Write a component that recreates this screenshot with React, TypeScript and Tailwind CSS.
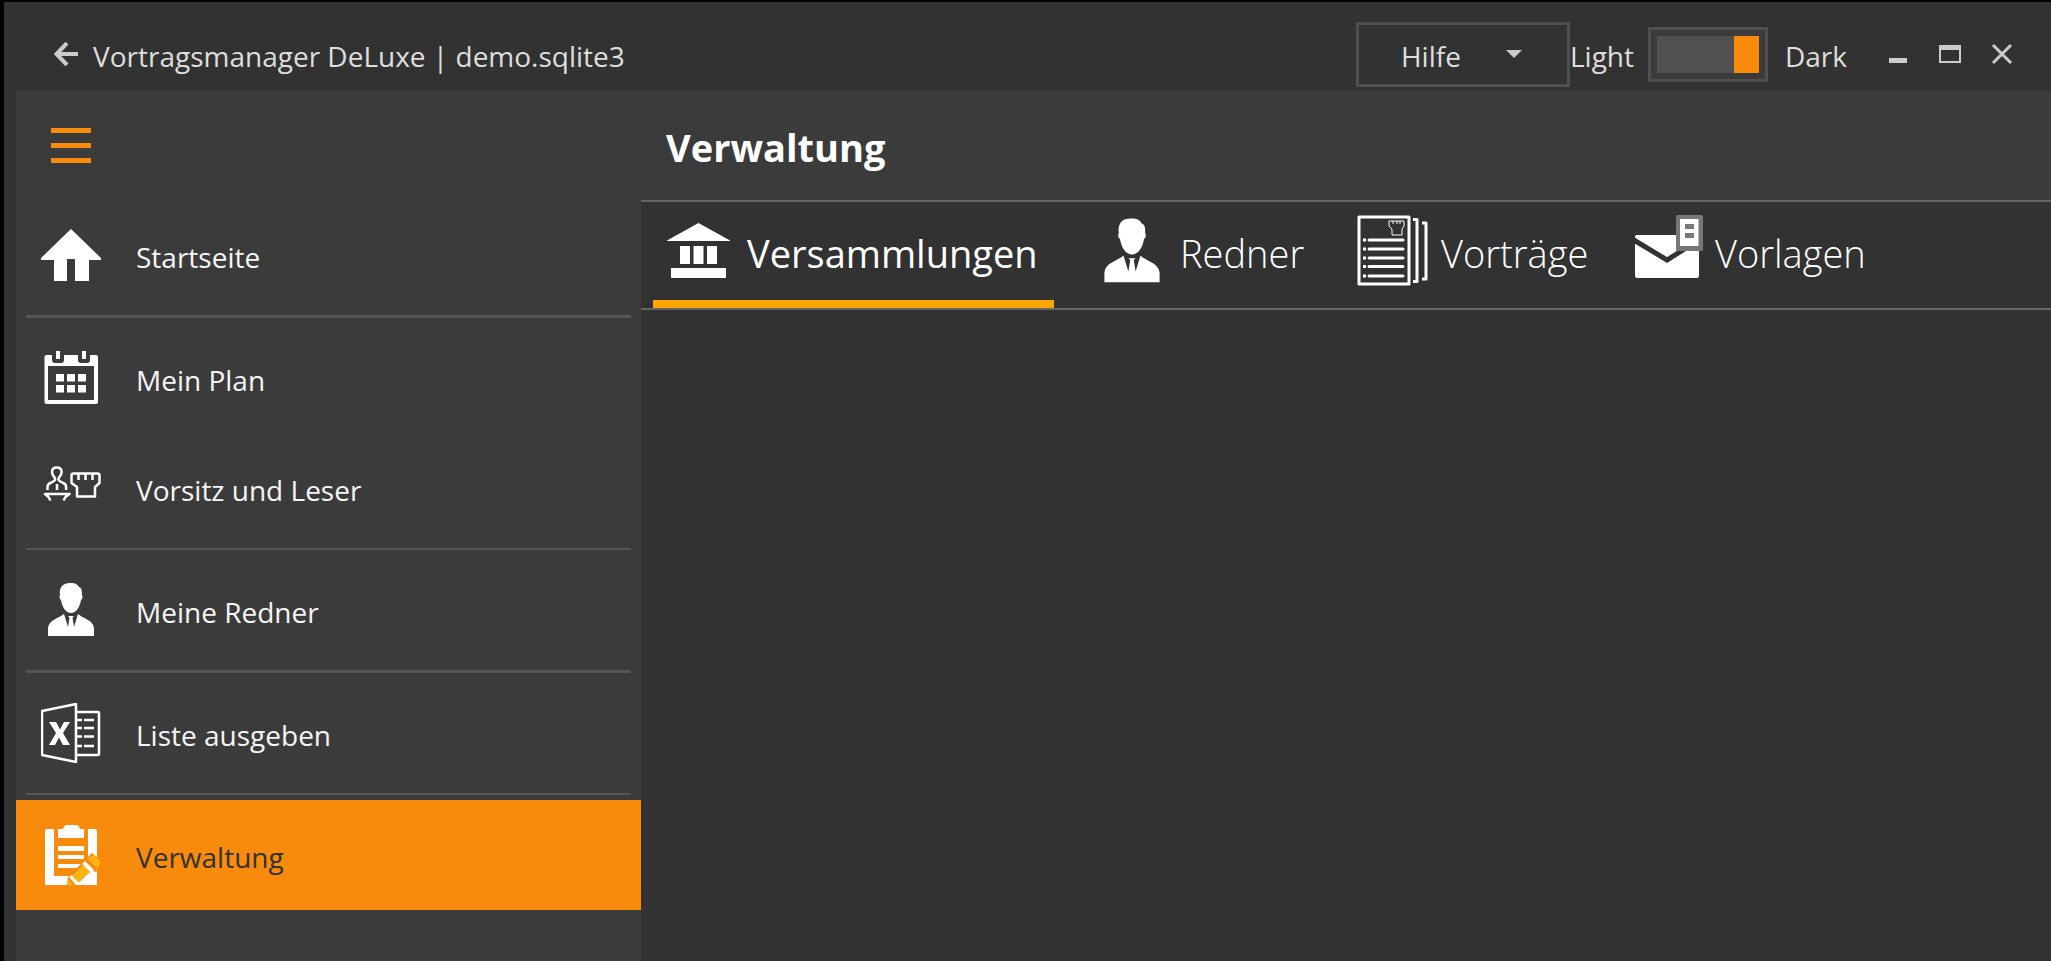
import React, { useState } from "react";

type IconProps = { className?: string };

const HomeIcon = ({ className }: IconProps) => (
  <svg viewBox="0 0 60 60" className={className} fill="currentColor" aria-hidden="true">
    <path d="M30 4 0 33v2h13v21h13V34h8v22h14V35h12v-2Z" />
  </svg>
);

const CalendarIcon = ({ className }: IconProps) => (
  <svg viewBox="0 0 60 60" className={className} fill="currentColor" aria-hidden="true">
    <path
      fillRule="evenodd"
      d="M5 7h6v5q0 3 3 3h6q3 0 3-3V7h14v5q0 3 3 3h6q3 0 3-3V7h6q2 0 2 2v45q0 2-2 2H5.500q-2 0-2-2V9q0-2 2-2ZM7 18v34h46V18Z"
    />
    <path d="M15 3h4v8h-4ZM41 3h4v8h-4ZM15 26h8v7.500h-8ZM26 26h8v7.500h-8ZM37 26h8v7.500h-8ZM15 37h8v7.500h-8ZM26 37h8v7.500h-8ZM37 37h8v7.500h-8Z" />
  </svg>
);

const ReaderIcon = ({ className }: IconProps) => (
  <svg
    viewBox="0 0 60 60"
    className={className}
    fill="none"
    stroke="currentColor"
    strokeWidth="2.500"
    strokeLinejoin="round"
    aria-hidden="true"
  >
    <path d="M6.500 32v-3q0-3 3-4l3.500-2q2-1 .5-3.500-2.500-2.500-2.500-5.500 0-4.500 4.800-4.500t4.800 4.500q0 3-2.500 5.500-1.500 2.500.5 3.500l3.500 2q3 1 3 4v3M16 26v6" />
    <path d="M9.500 42.500 7.500 39 4 36h24.500L24.500 39l-2 3.500" />
    <path d="M30.500 17.500q0-2 2-2h24q2 0 2 2V25l-4.500 4v9.500H36V29l-5.500-4ZM37.500 16v6M44.500 16v6M51.500 16v6" />
  </svg>
);

const PersonIcon = ({ className }: IconProps) => (
  <svg viewBox="0 0 60 60" className={className} fill="currentColor" aria-hidden="true">
    <path d="M29 3c5-.5 8 1.500 9 4 3 1 3 4 3 8 1 2 .5 4-1 5-1 7-5 13-10 13s-9-6-10-13c-1.500-1-2-3-1-5-1-7 2-12 10-12Z" />
    <path d="M7 56V48c1-8 9-9 16-14l4 13 1.500-9.500L27 36h6l-1.500 1.500L33 47l4-13c6 5 15 6 16 14v8Z" />
  </svg>
);

const ExcelIcon = ({ className }: IconProps) => (
  <svg
    viewBox="0 0 60 60"
    className={className}
    fill="none"
    stroke="currentColor"
    strokeWidth="2.500"
    strokeLinejoin="round"
    aria-hidden="true"
  >
    <path d="M1 8 35 1v58L1 52ZM35 9h22q1 0 1 1v41q0 1-1 1H35" />
    <path d="M36 17h5M43 17h10M36 25h5M43 25h10M36 33.500h5M43 33.500h10M36 43h5M43 43h10" />
    <path fill="currentColor" stroke="none" d="M8 19h7l4 7.500 4-7.500h6l-7 11 7 12h-7l-4-7.500-4 7.500H8l7-12Z" />
  </svg>
);

const ClipboardIcon = ({ className }: IconProps) => (
  <svg viewBox="0 0 60 60" className={className} aria-hidden="true">
    <path
      fill="#ffffff"
      d="M4 6q0-2 2-2h7v47h30l4-4V4h7q2 0 2 2v54H4ZM17 4h5q1-4 4-4h9q3 0 4 4h4v9H17ZM17 21h26v5H17ZM17 30h26v4H17ZM17 39h26v4H17Z"
    />
    <path fill="#f88b0b" d="m26 60 1-8 24-24 12 10-10 10 3 0v-2L34 60Z" />
    <path fill="#ffffff" d="M56 47v13H35l15-14ZM28 52l3-2 8 8-2 2h-2ZM41 39l3-3 9 9-3 3Z" />
    <path fill="#ffb412" d="M27 60v-6l5 6ZM31 51l11-11 7 7-12 10ZM47 34q4-5 7-3l5 5q2 3-3 7Z" />
  </svg>
);

const BankIcon = ({ className }: IconProps) => (
  <svg viewBox="0 0 72 72" className={className} fill="currentColor" aria-hidden="true">
    <path d="M35.500 8 67 25.500v.5H4v-.5ZM17 31h10v18H17ZM30.500 31h10v18h-10ZM44 31h10v18H44ZM8 53h55v10H8Z" />
  </svg>
);

const TalksIcon = ({ className }: IconProps) => (
  <svg
    viewBox="0 0 72 72"
    className={className}
    fill="none"
    stroke="currentColor"
    strokeWidth="3"
    aria-hidden="true"
  >
    <path d="M2 2h50v67H2ZM56 4.500h4v62h-4M65 8h4v56h-4" strokeLinejoin="round" />
    <path d="M12 25h34M12 34h34M12 43h34M12 51.500h34M12 61h34" strokeLinecap="round" />
    <path d="M6 25h3M6 34h3M6 43h3M6 51.500h3M6 61h3" />
    <path d="M32 6h15v5l-2 3v6H35v-6l-3-3ZM36 6v3M40 6v3M43 6v3" strokeWidth="1" />
  </svg>
);

const TemplatesIcon = ({ className }: IconProps) => (
  <svg viewBox="0 0 72 72" className={className} aria-hidden="true">
    <rect x="4" y="20" width="64" height="43" rx="2" fill="#ffffff" />
    <path fill="none" stroke="#323232" strokeWidth="5" d="m2 24.500 34 20.500L60 30" />
    <rect x="45" y="0" width="27" height="36" rx="1.500" fill="#777777" />
    <path fill="#ffffff" d="M49 4h18.500v27H49Z" />
    <path fill="#777777" d="M54 9h9v5h-9ZM54 18h9v5h-9Z" />
  </svg>
);

type NavItem = {
  label: string;
  Icon: (props: IconProps) => React.ReactElement;
  divider?: string;
};

const navItems: NavItem[] = [
  { label: "Startseite", Icon: HomeIcon, divider: "h-[3px]" },
  { label: "Mein Plan", Icon: CalendarIcon },
  { label: "Vorsitz und Leser", Icon: ReaderIcon, divider: "h-[2px]" },
  { label: "Meine Redner", Icon: PersonIcon, divider: "h-[3px]" },
  { label: "Liste ausgeben", Icon: ExcelIcon, divider: "h-[2px]" },
  { label: "Verwaltung", Icon: ClipboardIcon },
];

const tabs = [
  { label: "Versammlungen", Icon: BankIcon, width: "min-w-[401px]" },
  { label: "Redner", Icon: PersonIcon, width: "min-w-[229px]" },
  { label: "Vorträge", Icon: TalksIcon, width: "min-w-[242px]" },
  { label: "Vorlagen", Icon: TemplatesIcon, width: "min-w-[242px]" },
];

function TitleBar() {
  const [dark, setDark] = useState(true);
  return (
    <header className="flex h-[88px] shrink-0 items-center pt-4 pr-[38px] pl-[50px] text-[28px] text-[#dedede]">
      <button type="button" aria-label="Zurück" className="text-[#cccccc]">
        <svg viewBox="0 0 24 24" className="size-6" fill="none" stroke="currentColor" strokeWidth="4">
          <path d="M24 12H3M13 1 2.500 12 13 23" />
        </svg>
      </button>
      <h1 className="ml-[15px] pt-[3px]">Vortragsmanager DeLuxe | demo.sqlite3</h1>
      <div className="ml-auto flex items-center">
        <button
          type="button"
          className="flex h-[65px] w-[214px] items-center justify-between border-[3px] border-[#4f4f4f] pr-[45px] pl-[42px]"
        >
          <span className="pt-[3px]">Hilfe</span>
          <svg viewBox="0 0 16 8" className="h-2 w-4" fill="#cccccc" aria-hidden="true">
            <path d="M0 0h16L8 8Z" />
          </svg>
        </button>
        <label className="flex cursor-pointer items-center">
          <span className="w-[78px] pt-[3px]">Light</span>
          <input
            type="checkbox"
            role="switch"
            aria-label="Dark"
            checked={dark}
            onChange={(e) => setDark(e.target.checked)}
            className="peer sr-only"
          />
          <span className="flex h-[55px] w-[120px] border-[3px] border-[#4f4f4f] bg-[#3b3b3b] p-[6px] peer-checked:*:justify-end">
            <span className="flex grow bg-[#505050]">
              <span className="w-[25px] bg-[#f88b0b]" />
            </span>
          </span>
          <span className="pt-[3px] pl-[17px]">Dark</span>
        </label>
        <div className="ml-[40px] flex gap-[30px] text-[#cccccc]">
          <button type="button" aria-label="Minimieren">
            <svg viewBox="0 0 22 22" className="size-[22px]" fill="currentColor">
              <path d="M2 15h18v5H2Z" />
            </svg>
          </button>
          <button type="button" aria-label="Maximieren">
            <svg viewBox="0 0 22 22" className="size-[22px]" fill="currentColor">
              <path fillRule="evenodd" d="M0 2h22v18H0ZM2 7v11h18V7Z" />
            </svg>
          </button>
          <button type="button" aria-label="Schließen">
            <svg viewBox="0 0 22 22" className="size-[22px]" fill="none" stroke="currentColor" strokeWidth="3">
              <path d="m2 2 18 18M20 2 2 20" />
            </svg>
          </button>
        </div>
      </div>
    </header>
  );
}

function Sidebar({ active, onSelect }: { active: string; onSelect: (label: string) => void }) {
  return (
    <nav className="w-[625px] shrink-0 bg-[#3b3b3b] text-[28px]">
      <div className="flex h-[110px] items-center pl-[35px]">
        <button type="button" aria-label="Menü" className="flex w-10 flex-col gap-[10px]">
          <span className="h-[5px] w-full bg-[#f88b0b]" />
          <span className="h-[5px] w-full bg-[#f88b0b]" />
          <span className="h-[5px] w-full bg-[#f88b0b]" />
        </button>
      </div>
      <ul>
        {navItems.map(({ label, Icon, divider }) => (
          <li key={label}>
            <button
              type="button"
              onClick={() => onSelect(label)}
              className={`flex h-[110px] w-full items-center gap-[35px] pl-[25px] text-left ${
                label === active ? "bg-[#f88b0b] text-[#323232]" : "text-[#f5f5f5]"
              }`}
            >
              <Icon className="size-[60px] shrink-0 text-white" />
              <span className="pt-[3px]">{label}</span>
            </button>
            {divider && <div className={`mx-[10px] my-[5px] bg-[#555555] ${divider}`} />}
          </li>
        ))}
      </ul>
    </nav>
  );
}

function Content({ title }: { title: string }) {
  const [tab, setTab] = useState("Versammlungen");
  return (
    <main className="flex min-w-0 grow flex-col">
      <h2 className="flex h-[110px] items-center bg-[#3b3b3b] pt-1 pl-[25px] text-[38px] font-bold text-white">
        {title}
      </h2>
      <div
        role="tablist"
        className="flex h-[110px] gap-8 border-y-2 border-[#666666] pl-[12px] text-[38px] whitespace-nowrap text-white"
      >
        {tabs.map(({ label, Icon, width }) => (
          <button
            key={label}
            type="button"
            role="tab"
            aria-selected={label === tab}
            onClick={() => setTab(label)}
            className={`flex items-center gap-[12px] border-b-8 pl-[10px] ${width} ${
              label === tab ? "border-[#ffa500]" : "border-transparent font-light"
            }`}
          >
            <Icon className="size-[72px] shrink-0" />
            <span className="pt-1">{label}</span>
          </button>
        ))}
      </div>
    </main>
  );
}

export default function App() {
  const [page, setPage] = useState("Verwaltung");
  return (
    <div className="flex min-h-screen flex-col border-t-2 border-l-4 border-black bg-[#323232] font-['Open_Sans','Noto_Sans',sans-serif]">
      <TitleBar />
      <div className="flex grow pl-[12px]">
        <Sidebar active={page} onSelect={setPage} />
        <Content title={page} />
      </div>
    </div>
  );
}
